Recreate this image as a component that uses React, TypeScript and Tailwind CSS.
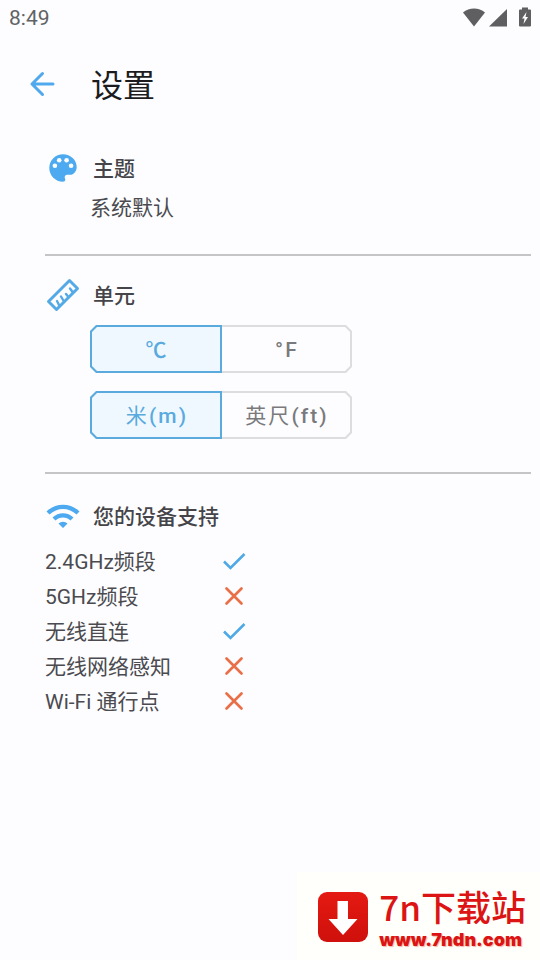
import type { ReactNode } from "react";
import { MdWifi } from "react-icons/md";

const features = [
  { name: "2.4GHz频段", supported: true },
  { name: "5GHz频段", supported: false },
  { name: "无线直连", supported: true },
  { name: "无线网络感知", supported: false },
  { name: "Wi-Fi 通行点", supported: false },
];

const units = [
  {
    name: "temperature",
    options: [
      { label: "", symbol: "℃" },
      { label: "", symbol: "°F" },
    ],
  },
  {
    name: "distance",
    options: [
      { label: "米", symbol: "(m)" },
      { label: "英尺", symbol: "(ft)" },
    ],
  },
];

type Option = { label: string; symbol: string };

function StatusBar() {
  return (
    <div className="flex h-9 items-center justify-between pl-[9px] pr-2 text-[21px] text-[#626264]">
      <span className="pt-0.5">8:49</span>
      <svg width="70" height="24" viewBox="0 0 70 24" fill="#5f5f61" aria-hidden="true">
        <path d="M1 6.500C7 1 17 1 23 6.500L12 20.500Z" />
        <path d="M45 3V20.500H27Z" />
        <path
          fillRule="evenodd"
          d="M60 1.500H66V3.500H68Q69 3.500 69 4.500V19.500Q69 20.500 68 20.500H58Q57 20.500 57 19.500V4.500Q57 3.500 58 3.500H60ZM64.500 6L60 12.500H62.500L61.500 18L66 11H63.500Z"
        />
      </svg>
    </div>
  );
}

function PaletteIcon() {
  return (
    <svg width="36" height="36" viewBox="0 0 36 36" aria-hidden="true">
      <path
        fill="#4eaaf0"
        d="M18 4.300C10.400 4.300 4.300 10.400 4.300 18S10.400 31.700 18 31.700C19.300 31.700 20.300 30.700 20.300 29.400C20.300 28.600 19.700 28.100 19.700 27.200C19.700 25.900 20.700 24.800 22 24.800H25C28.700 24.800 31.700 21.300 31.700 17C31.700 9.900 25.600 4.300 18 4.300Z"
      />
      <g fill="#fdfdff">
        <circle cx="9.900" cy="15.800" r="2.300" />
        <circle cx="14.200" cy="10.200" r="2.300" />
        <circle cx="21.600" cy="10.200" r="2.300" />
        <circle cx="26.100" cy="15.800" r="2.300" />
      </g>
    </svg>
  );
}

function RulerIcon() {
  return (
    <svg width="36" height="36" viewBox="0 0 36 36" fill="none" stroke="#54aae6" aria-hidden="true">
      <path strokeWidth="3" strokeLinejoin="round" d="M3.500 24.500L24.500 3.500L32.500 11.500L11.500 32.500Z" />
      <path strokeWidth="2.400" strokeLinecap="round" d="M14.500 29L12 24M19 24.500L16 19.500M23.500 20L21 17M28 15.500L25 11.500" />
    </svg>
  );
}

function CheckIcon() {
  return (
    <svg width="24" height="24" viewBox="0 0 24 24" role="img" aria-label="支持">
      <path fill="none" stroke="#4ea9e6" strokeWidth="2.600" d="M2 11.500L8.500 18L22.500 4" />
    </svg>
  );
}

function CrossIcon() {
  return (
    <svg width="24" height="24" viewBox="0 0 24 24" role="img" aria-label="不支持">
      <path fill="none" stroke="#e96f48" strokeWidth="2.700" strokeLinecap="round" d="M4.500 3.500L19.500 18.500M19.500 3.500L4.500 18.500" />
    </svg>
  );
}

function SectionTitle({ icon, children }: { icon: ReactNode; children: ReactNode }) {
  return (
    <div className="flex h-9 items-center gap-3 text-[#4eaaf0]">
      {icon}
      <h2 className="pt-0.5 text-[21px] leading-8 font-medium text-[#454549]">{children}</h2>
    </div>
  );
}

function OptionText({ option }: { option: Option }) {
  return (
    <span className="pt-1 pl-0.5">
      {option.label}
      <span className="font-medium">{option.symbol}</span>
    </span>
  );
}

function UnitToggle({ name, options }: { name: string; options: Option[] }) {
  return (
    <div role="radiogroup" aria-label={name} className="flex h-12 w-[262px] text-[21px] tracking-widest">
      <label className="flex-1 cursor-pointer bg-[#dddde0] p-[2px] text-[#7a7a7d] [clip-path:polygon(6px_0,100%_0,100%_100%,6px_100%,0_calc(100%-6px),0_6px)] has-checked:bg-[#5aaade] has-checked:text-[#5aaade]">
        <input type="radio" name={name} defaultChecked className="peer sr-only" />
        <span className="flex h-full items-center justify-center bg-[#fdfdff] [clip-path:polygon(5px_0,100%_0,100%_100%,5px_100%,0_calc(100%-5px),0_5px)] peer-checked:bg-[#eff8ff]">
          <OptionText option={options[0]} />
        </span>
      </label>
      <label className="flex-1 cursor-pointer bg-[#dddde0] py-[2px] pr-[2px] text-[#7a7a7d] [clip-path:polygon(0_0,calc(100%-6px)_0,100%_6px,100%_calc(100%-6px),calc(100%-6px)_100%,0_100%)] has-checked:bg-[#5aaade] has-checked:text-[#5aaade]">
        <input type="radio" name={name} className="peer sr-only" />
        <span className="flex h-full items-center justify-center bg-[#fdfdff] [clip-path:polygon(0_0,calc(100%-5px)_0,100%_5px,100%_calc(100%-5px),calc(100%-5px)_100%,0_100%)] peer-checked:bg-[#eff8ff]">
          <OptionText option={options[1]} />
        </span>
      </label>
    </div>
  );
}

export default function App() {
  return (
    <div className="flex min-h-screen flex-col bg-[#fdfdff] font-[Roboto,'Noto_Sans_CJK_SC',sans-serif] text-[#4b4b4f]">
      <StatusBar />

      <header className="flex h-24 items-center gap-[31px] pl-6">
        <button type="button" aria-label="返回" className="cursor-pointer">
          <svg width="36" height="36" viewBox="0 0 36 36" aria-hidden="true">
            <path
              fill="none"
              stroke="#4fa9ec"
              strokeWidth="3"
              strokeLinecap="round"
              strokeLinejoin="round"
              d="M29 18H8M18.500 7.500L8 18L18.500 28.500"
            />
          </svg>
        </button>
        <h1 className="pt-1 text-[32px] leading-10 text-[#1c1c1e]">设置</h1>
      </header>

      <main className="pr-[9px] pl-[45px]">
        <section className="border-b-2 border-[#c5c5c7] pt-[18px] pb-[30px]">
          <SectionTitle icon={<PaletteIcon />}>主题</SectionTitle>
          <button type="button" className="mt-1.5 ml-[45px] block cursor-pointer text-[21px] leading-8">
            系统默认
          </button>
        </section>

        <section className="border-b-2 border-[#c5c5c7] pt-[21px] pb-[33px]">
          <SectionTitle icon={<RulerIcon />}>单元</SectionTitle>
          <div className="mt-3 ml-[45px] flex flex-col gap-[18px]">
            {units.map((unit) => (
              <UnitToggle key={unit.name} name={unit.name} options={unit.options} />
            ))}
          </div>
        </section>

        <section className="pt-6">
          <SectionTitle icon={<MdWifi size={36} />}>您的设备支持</SectionTitle>
          <table className="mt-2.5 text-left text-[21px] leading-8">
            <tbody>
              {features.map((feature) => (
                <tr key={feature.name} className="h-[35px]">
                  <th scope="row" className="w-[177px] p-0 font-normal">{feature.name}</th>
                  <td className="p-0 align-middle">{feature.supported ? <CheckIcon /> : <CrossIcon />}</td>
                </tr>
              ))}
            </tbody>
          </table>
        </section>
      </main>

      {/* Download site badge */}
      <footer className="mt-auto flex items-center gap-2.5 self-end bg-[#fffffb] pt-2.5 pr-3.5 pb-2.5 pl-5 text-[#dc1414]">
        <svg width="52" height="54" viewBox="0 0 52 54" aria-hidden="true">
          <defs>
            <linearGradient id="badge" x1="0" y1="0" x2="0" y2="1">
              <stop offset="0" stopColor="#e41a12" />
              <stop offset="1" stopColor="#cf100c" />
            </linearGradient>
          </defs>
          <rect x="1" y="3" width="50" height="50" rx="9" fill="url(#badge)" />
          <path fill="#fff" d="M20.500 12H31V30H40.500L26 46L11.500 30H20.500Z" />
        </svg>
        <div className="flex flex-col">
          <span className="font-['Noto_Sans_CJK_SC',sans-serif] text-[35px] leading-12 font-medium">7n下载站</span>
          <a href="#" className="font-[Inter,sans-serif] text-[18px] leading-5 font-black [text-shadow:1px_1px_1px_#f0b8ac]">
            www.7ndn.com
          </a>
        </div>
      </footer>
    </div>
  );
}
